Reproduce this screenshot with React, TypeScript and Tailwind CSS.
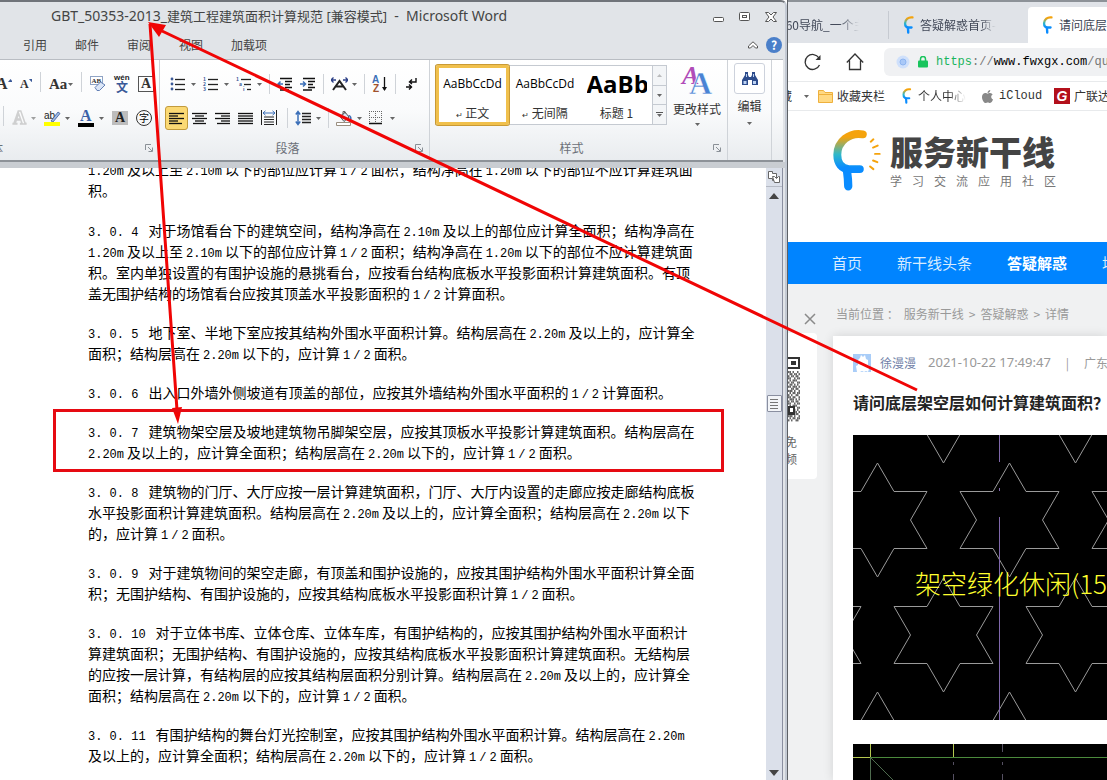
import type { ReactNode } from "react";
import clsx from "clsx";
import { FaApple } from "react-icons/fa";

const TABS = ["引用", "邮件", "审阅", "视图", "加载项"];

// one entry per clause, one string per printed line
const CLAUSES: { no?: string; lines: string[] }[] = [
  {
    lines: [
      "1.20m 及以上至 2.10m 以下的部位应计算 1/2 面积；结构净高在 1.20m 以下的部位不应计算建筑面",
      "积。",
    ],
  },
  {
    no: "3. 0. 4",
    lines: [
      "对于场馆看台下的建筑空间，结构净高在 2.10m 及以上的部位应计算全面积；结构净高在",
      "1.20m 及以上至 2.10m 以下的部位应计算 1/2 面积；结构净高在 1.20m 以下的部位不应计算建筑面",
      "积。室内单独设置的有围护设施的悬挑看台，应按看台结构底板水平投影面积计算建筑面积。有顶",
      "盖无围护结构的场馆看台应按其顶盖水平投影面积的 1/2 计算面积。",
    ],
  },
  {
    no: "3. 0. 5",
    lines: [
      "地下室、半地下室应按其结构外围水平面积计算。结构层高在 2.20m 及以上的，应计算全",
      "面积；结构层高在 2.20m 以下的，应计算 1/2 面积。",
    ],
  },
  {
    no: "3. 0. 6",
    lines: ["出入口外墙外侧坡道有顶盖的部位，应按其外墙结构外围水平面积的 1/2 计算面积。"],
  },
  {
    no: "3. 0. 7",
    lines: [
      "建筑物架空层及坡地建筑物吊脚架空层，应按其顶板水平投影计算建筑面积。结构层高在",
      "2.20m 及以上的，应计算全面积；结构层高在 2.20m 以下的，应计算 1/2 面积。",
    ],
  },
  {
    no: "3. 0. 8",
    lines: [
      "建筑物的门厅、大厅应按一层计算建筑面积，门厅、大厅内设置的走廊应按走廊结构底板",
      "水平投影面积计算建筑面积。结构层高在 2.20m 及以上的，应计算全面积；结构层高在 2.20m 以下",
      "的，应计算 1/2 面积。",
    ],
  },
  {
    no: "3. 0. 9",
    lines: [
      "对于建筑物间的架空走廊，有顶盖和围护设施的，应按其围护结构外围水平面积计算全面",
      "积；无围护结构、有围护设施的，应按其结构底板水平投影面积计算 1/2 面积。",
    ],
  },
  {
    no: "3. 0. 10",
    lines: [
      "对于立体书库、立体仓库、立体车库，有围护结构的，应按其围护结构外围水平面积计",
      "算建筑面积；无围护结构、有围护设施的，应按其结构底板水平投影面积计算建筑面积。无结构层",
      "的应按一层计算，有结构层的应按其结构层面积分别计算。结构层高在 2.20m 及以上的，应计算全",
      "面积；结构层高在 2.20m 以下的，应计算 1/2 面积。",
    ],
  },
  {
    no: "3. 0. 11",
    lines: [
      "有围护结构的舞台灯光控制室，应按其围护结构外围水平面积计算。结构层高在 2.20m",
      "及以上的，应计算全面积；结构层高在 2.20m 以下的，应计算 1/2 面积。",
    ],
  },
];

const MONO = "font-['Liberation_Mono','Noto_Sans_CJK_SC',monospace]";

function Line({ text }: { text: string }) {
  return (
    <>
      {text.split(/\s*(\d\.\d\dm|1\/2)\s*/).map((part, i, parts) => {
        if (i % 2 === 0) return part;
        const atStart = i === 1 && parts[0] === "";
        return (
          <span key={i} className={clsx(MONO, "mr-[3px] text-xs leading-none", !atStart && "ml-[3px]")}>
            {part === "1/2" ? (
              <>
                1<span className="px-[3px]">/</span>2
              </>
            ) : (
              part
            )}
          </span>
        );
      })}
    </>
  );
}

function Caret({ className }: { className?: string }) {
  return (
    <svg width="5" height="3" viewBox="0 0 5 3" className={clsx("shrink-0", className)}>
      <path d="M0 0h5L2.5 3z" fill="#666" />
    </svg>
  );
}

function Tool({ label, className, drop, children }: { label: string; className?: string; drop?: boolean; children: ReactNode }) {
  return (
    <button
      type="button"
      aria-label={label}
      className={clsx("flex h-6 shrink-0 items-center", drop ? "justify-between" : "justify-center", className ?? (drop ? "w-[26px]" : "w-4"))}
    >
      {children}
      {drop && <Caret />}
    </button>
  );
}

function Sep() {
  return <span className="h-5 w-px shrink-0 bg-[#cfd3d8]" />;
}

function Lines({ rows }: { rows: [number, number][] }) {
  return (
    <svg width="15" height="13" viewBox="0 0 15 13" stroke="#111" strokeWidth="1.3">
      {rows.map(([a, b], i) => (
        <path key={i} d={`M${a} ${1.5 + i * 2.5}H${b}`} />
      ))}
    </svg>
  );
}

function ListIcon({ marks }: { marks: string[] }) {
  return (
    <svg width="16" height="16" viewBox="0 0 16 16" className="overflow-visible">
      {marks.map((m, i) => (
        <g key={i}>
          {m === "•" ? (
            <circle cx="2" cy={3 + i * 5} r="1.4" fill="#3b5998" />
          ) : (
            <text x={m === "a" ? 3 : m === "i" ? 7 : 0} y={5 + i * 5} fontSize="5" fontWeight="bold" fill="#3b5998">{m}</text>
          )}
          <path d={`M${m === "a" ? 8 : m === "i" ? 11 : 5} ${3.5 + i * 5}H15`} stroke="#222" strokeWidth="1.3" />
        </g>
      ))}
    </svg>
  );
}

function Indent({ out }: { out?: boolean }) {
  return (
    <svg width="16" height="14" viewBox="0 0 16 14" fill="none">
      <path d="M3 1.5h12M8 4.5h7M8 7.5h5M8 10.5h7M3 13h9" stroke="#111" strokeWidth="1.4" />
      <path d={out ? "M6 7H1M3.500 4.500 1 7l2.500 2.500" : "M0 7h5M3 4.500 5.500 7 3 9.500"} stroke="#3b6fb8" strokeWidth="1.5" />
    </svg>
  );
}

function Launcher() {
  return (
    <button type="button" aria-label="对话框启动器">
      <svg width="8" height="8" viewBox="0 0 8 8" fill="none" stroke="#8a9097">
        <path d="M.5 6V.5H6M3 3l4 4M7.500 3.500v4h-4" />
      </svg>
    </button>
  );
}

function GroupLabel({ text }: { text: string }) {
  return (
    <div className="mt-auto flex h-6 items-center pr-[6px]">
      <span className="flex-1 text-center text-xs text-[#6b7078]">{text}</span>
      <Launcher />
    </div>
  );
}

function FontGroup() {
  return (
    <section className="flex w-40 shrink-0 flex-col border-r border-[#cfd3d8]">
      <div className="mt-3 flex gap-2 font-['Liberation_Serif',serif] font-bold text-[#333]">
        <Tool label="增大字体" className="w-3">
          <span className="-ml-1 text-base">A</span>
          <svg width="5" height="12"><path d="M0 4h5L2.500 1z" fill="#3b5998" /></svg>
        </Tool>
        <Tool label="缩小字体" className="w-3">
          <span className="text-xs">A</span>
          <svg width="5" height="12"><path d="M0 1h5L2.500 4z" fill="#3b5998" /></svg>
        </Tool>
        <Sep />
        <Tool label="更改大小写" drop className="w-6"><span className="text-[15px]">Aa</span></Tool>
        <Sep />
        <Tool label="清除格式">
          <svg width="16" height="17" viewBox="0 0 16 17">
            <rect x=".5" y=".5" width="12" height="8" fill="#fff" stroke="#8fa3c4" />
            <text x="1.500" y="7" fontSize="7" fill="#333">AB</text>
            <path d="M5 11.500 10.500 6l4.500 3-5.500 5.500H7z" fill="#dbe6f7" stroke="#6380b5" />
          </svg>
        </Tool>
        <Tool label="拼音指南">
          <svg width="16" height="18" viewBox="0 0 16 18" className="overflow-visible">
            <text x="0" y="5" fontSize="8" fontFamily="Liberation Sans" fill="#222">wén</text>
            <text x="2" y="17" fontSize="12" fontFamily="Noto Sans CJK SC" fill="#3b5998">文</text>
          </svg>
        </Tool>
        <Tool label="字符边框"><span className="size-4 border border-[#555] text-center text-sm leading-[14px]">A</span></Tool>
      </div>
      <div className="mt-[10px] flex gap-2 pl-[3px] font-['Liberation_Serif',serif] font-bold">
        <Sep />
        <Tool label="文本效果" drop className="w-6 opacity-60">
          <svg width="16" height="16" viewBox="0 0 16 16" className="overflow-visible">
            <text x="1" y="14" fontSize="18" fill="#fff" stroke="#b5b5b5" strokeWidth="1.5">A</text>
          </svg>
        </Tool>
        <Tool label="突出显示" drop>
          <svg width="18" height="17" viewBox="0 0 18 17">
            <text x="0" y="9" fontSize="10" fontFamily="Liberation Sans" fontWeight="normal" fill="#222">ab</text>
            <path d="M7 11 14 2l2 1.500L9 12z" fill="#9dbbe6" stroke="#3b5998" strokeWidth=".8" />
            <path d="M0 12h16v4H0z" fill="#ff0" />
          </svg>
        </Tool>
        <Tool label="字体颜色" drop>
          <svg width="16" height="17" viewBox="0 0 16 17" className="overflow-visible">
            <text x="2" y="11" fontSize="16" fill="#3b62a8">A</text>
            <path d="M0 13h16v4H0z" fill="#000" />
          </svg>
        </Tool>
        <Tool label="字符底纹"><span className="w-4 bg-[#bdbdbd] text-center text-sm leading-[14px] text-[#222]">A</span></Tool>
        <Tool label="带圈字符">
          <span className="size-4 rounded-full border border-[#333] text-center font-['Noto_Sans_CJK_SC',sans-serif] text-[10px] leading-[14px] font-normal text-black">字</span>
        </Tool>
      </div>
      <div className="mt-auto flex h-6 items-center justify-between pr-[6px] text-xs text-[#6b7078]">
        <span className="-ml-[9px]">体</span>
        <Launcher />
      </div>
    </section>
  );
}

function ParagraphGroup() {
  return (
    <section className="flex w-[270px] shrink-0 flex-col border-r border-[#cfd3d8]">
      <div className="mt-3 flex items-center gap-[7px] pl-[10px]">
        <Tool label="项目符号" drop><ListIcon marks={["•", "•", "•"]} /></Tool>
        <Tool label="编号" drop><ListIcon marks={["1", "2", "3"]} /></Tool>
        <Tool label="多级列表" drop><ListIcon marks={["1", "a", "i"]} /></Tool>
        <Sep />
        <Tool label="减少缩进量"><Indent out /></Tool>
        <Tool label="增加缩进量"><Indent /></Tool>
        <Sep />
        <Tool label="中文版式" drop>
          <svg width="17" height="14" viewBox="0 0 17 14" fill="none">
            <path d="M2 13 8.500 4 15 13M5 9.500h7" stroke="#222" strokeWidth="2" />
            <path d="M0 3h5M2.500.5 0 3l2.500 2.500M17 3h-5M14.500.5 17 3l-2.500 2.500" stroke="#2b3f86" strokeWidth="1.300" />
          </svg>
        </Tool>
        <Sep />
        <Tool label="排序">
          <svg width="16" height="18" viewBox="0 0 16 18" fontFamily="Liberation Sans" fontWeight="bold" className="overflow-visible">
            <text x="0" y="8" fontSize="10" fill="#3b6fb8">A</text>
            <text x="1" y="17" fontSize="10" fill="#a0522d">Z</text>
            <path d="M12.500 2v13" stroke="#111" strokeWidth="1.300" />
            <path d="M10 12h5l-2.500 4z" fill="#111" />
          </svg>
        </Tool>
        <Sep />
        <Tool label="显示编辑标记">
          <svg width="14" height="14" viewBox="0 0 14 14" fill="none" stroke="#111" strokeWidth="1.400">
            <path d="M12 1v4H6M8 2.500 5.500 5 8 7M2 10h6M5 7.500 7.500 10 5 12.500" />
          </svg>
        </Tool>
      </div>
      <div className="mt-[10px] flex items-center gap-[7px] pl-[5px]">
        <div className="flex">
          <Tool label="左对齐" className="w-[23px] rounded-[3px] border border-[#c29b3d] bg-[#fbd974]">
            <Lines rows={[[0, 15], [0, 9], [0, 15], [0, 9], [0, 13]]} />
          </Tool>
          <Tool label="居中" className="w-[23px]"><Lines rows={[[0, 15], [3, 12], [0, 15], [3, 12], [1, 14]]} /></Tool>
          <Tool label="右对齐" className="w-[23px]"><Lines rows={[[0, 15], [6, 15], [0, 15], [6, 15], [2, 15]]} /></Tool>
          <Tool label="两端对齐" className="w-[23px]"><Lines rows={[[0, 15], [0, 15], [0, 15], [0, 15], [0, 15]]} /></Tool>
          <Tool label="分散对齐" className="w-[23px]">
            <svg width="16" height="16" viewBox="0 0 16 16" fill="none">
              <path d="M.5 0v15M15.500 0v15M3 7h10M3 9.500h10M3 12h10M3 14.500h10" stroke="#222" />
              <path d="M2 3h12M4.500.8 2 3l2.500 2.200M11.500.8 14 3l-2.500 2.200" stroke="#3b6fb8" />
            </svg>
          </Tool>
        </div>
        <Sep />
        <Tool label="行距" drop>
          <svg width="16" height="16" viewBox="0 0 16 16" fill="none">
            <path d="M7 3.500h9M7 6.500h9M7 9.500h9M7 12.500h9" stroke="#222" strokeWidth="1.300" />
            <path d="M3 2v12M.8 4.500 3 1.500l2.200 3M.8 11.500 3 14.500l2.200-3" stroke="#3b6fb8" strokeWidth="1.500" />
          </svg>
        </Tool>
        <Sep />
        <Tool label="底纹" drop>
          <svg width="17" height="16" viewBox="0 0 17 16" fill="none">
            <path d="M4 6.500 9 2l4 5-5 4.500z" fill="#dce6f5" stroke="#555" />
            <path d="M7 5V1.500h2V4" stroke="#666" />
            <path d="M12 5c3 0 4 2 3.500 5-1.500-.5-2-2-2-3.500z" fill="#3b6fb8" />
            <path d="M.5 12.500h14v3H.5z" fill="#fff" stroke="#9a8f80" />
          </svg>
        </Tool>
        <Tool label="边框" drop>
          <svg width="14" height="14" viewBox="0 0 14 14" fill="none" stroke="#666">
            <path d="M.5 0v12M6.500 0v12M12.500 0v12M0 .5h13M0 6.500h13" strokeDasharray="1 1" />
            <path d="M0 12.500h13" stroke="#111" strokeWidth="1.500" />
          </svg>
        </Tool>
      </div>
      <GroupLabel text="段落" />
    </section>
  );
}

function StyleGroup() {
  return (
    <section className="flex w-[298px] shrink-0 flex-col border-r border-[#cfd3d8]">
      <div className="mt-[5px] flex pl-[5px]">
        <div className="flex h-[60px] border border-[#c5cad1] bg-white text-[#333]">
          <button type="button" className="-my-px flex w-[73px] shrink-0 flex-col items-center justify-between rounded-[2px] border-3 border-[#f0c04c] pt-2 pb-[1px] ring-1 ring-[#c99a35]">
            <span className="font-['Open_Sans',sans-serif] text-xs text-black">AaBbCcDd</span>
            <span className="text-xs"><span className="text-[8px]">↵</span> 正文</span>
          </button>
          <button type="button" className="flex w-[72px] flex-col items-center justify-between pt-[10px] pb-[3px]">
            <span className="font-['Open_Sans',sans-serif] text-xs text-black">AaBbCcDd</span>
            <span className="text-xs"><span className="text-[8px]">↵</span> 无间隔</span>
          </button>
          <button type="button" className="flex w-[71px] flex-col items-center justify-between pb-[3px]">
            <span className="h-9 w-[60px] overflow-hidden text-left font-['Open_Sans',sans-serif] text-2xl leading-9 font-bold text-black">AaBb</span>
            <span className="text-xs">标题 1</span>
          </button>
          <div className="flex w-[14px] flex-col divide-y divide-[#c5cad1] border-l border-[#c5cad1] bg-[#f3f5f7]">
            <button type="button" aria-label="上一行" className="flex flex-1 items-center justify-center"><Caret className="rotate-180 opacity-40" /></button>
            <button type="button" aria-label="下一行" className="flex flex-1 items-center justify-center"><Caret /></button>
            <button type="button" aria-label="其他" className="flex flex-1 flex-col items-center justify-center gap-px"><span className="h-px w-[7px] bg-[#555]" /><Caret /></button>
          </div>
        </div>
        <button type="button" className="flex flex-1 flex-col items-center text-xs text-[#333]">
          <svg width="32" height="32" viewBox="0 0 32 32" fontFamily="Liberation Serif" fontWeight="bold" className="overflow-visible">
            <text x="1" y="19" fontSize="26" fontStyle="italic" fill="#b04cb8">A</text>
            <text x="8" y="29" fontSize="32" fill="#4a83d4" stroke="#fff" strokeWidth=".5">A</text>
          </svg>
          <span className="mt-[2px] leading-5">更改样式</span>
          <Caret className="mt-1" />
        </button>
      </div>
      <GroupLabel text="样式" />
    </section>
  );
}

function EditGroup() {
  return (
    <section className="flex w-11 shrink-0 justify-center border-r border-[#cfd3d8] pt-[3px]">
      <button type="button" className="flex flex-col items-center self-start text-xs text-[#333]">
        <span className="flex size-[31px] items-center justify-center rounded-[3px] border border-[#cdd2dc] bg-white">
          <svg width="16" height="15" viewBox="0 0 16 15">
            <path d="M3 1h3v3l1 2h2l1-2V1h3v3l3 5v5h-6v-5H6v5H0V9l3-5z" fill="#2d4c8c" />
            <path d="M1.500 10h3v3h-3zM11 10h3v3h-3zM4 3h1v3H4zM11 3h1v3h-1z" fill="#bcd2f2" />
          </svg>
        </span>
        <span className="mt-[2px] leading-5">编辑</span>
        <Caret className="mt-[6px]" />
      </button>
    </section>
  );
}

function TitleBar() {
  return (
    <header className="flex h-[29px] shrink-0 items-center justify-between pr-2 pl-[51px]">
      <h1 className="font-['Noto_Sans','Noto_Sans_CJK_SC',sans-serif] text-[13px] whitespace-pre text-[#444]">
        <span className="text-sm">GBT_50353-2013_</span>
        建筑工程建筑面积计算规范 [兼容模式]
        <span className="text-sm">{"  -  Microsoft Word"}</span>
      </h1>
      <div className="flex items-center gap-[14px]">
        <button type="button" aria-label="最小化">
          <svg width="12" height="12" fill="#fff" stroke="#555"><rect x=".5" y="6.500" width="10" height="4" rx="1" /></svg>
        </button>
        <button type="button" aria-label="还原">
          <svg width="12" height="12" fill="#fff" stroke="#555"><rect x=".5" y="1.500" width="10" height="8" rx="1" /><rect x="3.500" y="4.500" width="4" height="2" /></svg>
        </button>
        <button type="button" aria-label="关闭">
          <svg width="12" height="12" viewBox="0 0 12 12" fill="#fff" stroke="#555"><path d="M.5 1.500h3L6 4l2.500-2.500h3L8 6l3.500 4.500h-3L6 8l-2.500 2.500h-3L4 6z" /></svg>
        </button>
      </div>
    </header>
  );
}

function WordWindow() {
  return (
    <main className="flex min-w-0 flex-1 flex-col rounded-tr-md border-t-2 border-r-2 border-t-[#70747a] border-r-[#c3c9d3] bg-[#e1e4e8] font-['Noto_Sans_CJK_SC',sans-serif]">
      <TitleBar />
      <nav className="flex h-7 shrink-0 items-center gap-7 pr-[3px] pl-[23px] text-xs text-[#444]">
        {TABS.map((t) => (
          <button type="button" key={t}>{t}</button>
        ))}
        <div className="ml-auto flex items-center gap-2">
          <button type="button" aria-label="功能区最小化">
            <svg width="10" height="8" viewBox="0 0 10 8" fill="#fff" stroke="#555"><path d="M.5 5 5 .8 9.500 5v2h-2L5 4.500 2.500 7h-2z" /></svg>
          </button>
          <button type="button" aria-label="帮助" className="size-4 rounded-full bg-[#4a7fc9] text-center text-xs leading-4 font-bold text-white">?</button>
        </div>
      </nav>
      <div className="mr-[2px] flex h-[103px] shrink-0 overflow-hidden border-t border-b-2 border-t-[#b9bdc3] border-b-[#8d9298] bg-linear-to-b from-white via-[#fafbfc] to-[#e9ecef]">
        <FontGroup />
        <ParagraphGroup />
        <StyleGroup />
        <EditGroup />
      </div>
      <div className="h-[6px] shrink-0 bg-[#c9cdd2]" />
      <div className="flex min-h-0 flex-1">
        <article className="min-w-0 flex-1 overflow-hidden bg-white pl-[88px] text-sm leading-[21px] whitespace-nowrap text-black">
          {/* the page is scrolled, so the first line is cut by the ribbon */}
          <div className="-mt-[9px]">
            {CLAUSES.map((c, i) => (
              <p key={i} className={clsx(i === 0 ? "mb-[19px]" : "mb-[18px]")}>
                {c.lines.map((l, j) => (
                  <span key={l} className="block">
                    {j === 0 && c.no && <span className={clsx(MONO, "mr-[10px] text-xs leading-none")}>{c.no}</span>}
                    <Line text={l} />
                  </span>
                ))}
              </p>
            ))}
          </div>
        </article>
        <div className="mr-[2px] flex w-[17px] shrink-0 flex-col items-center border-r border-[#8a8fa0] bg-[#dbe0ea]">
          <button type="button" aria-label="标尺" className="flex h-[19px] w-full items-center justify-center border-b border-[#b5bac4]">
            <svg width="12" height="12" viewBox="0 0 12 12" fill="#fff" stroke="#666">
              <path d="M.5.5h4v2h4v7h-4v-2h-4z" /><path d="M4.500 5.500h2l2 2 2-2h1v6h-5z" />
            </svg>
          </button>
          <button type="button" aria-label="向上滚动" className="mt-[6px]"><svg width="10" height="6"><path d="M0 6h10L5 0z" fill="#444" /></svg></button>
          <div className="flex-[196]" />
          <span className="flex h-[17px] w-[15px] flex-col items-center justify-center gap-[2px] rounded-[1px] border border-[#8a8fa0] bg-[#f3f5f8]">
            <i className="h-px w-2 bg-[#777]" /><i className="h-px w-2 bg-[#777]" /><i className="h-px w-2 bg-[#777]" /><i className="h-px w-2 bg-[#777]" />
          </span>
          <div className="flex-[358]" />
          <button type="button" aria-label="向下滚动" className="mb-1"><svg width="10" height="6"><path d="M0 0h10L5 6z" fill="#444" /></svg></button>
        </div>
      </div>
    </main>
  );
}

function Mark({ id, width, height, rays }: { id: string; width: number; height: number; rays?: boolean }) {
  return (
    <svg width={width} height={height} viewBox={rays ? "0 0 148 188" : "0 0 108 188"} fill="none" strokeLinecap="round" className="shrink-0">
      <defs>
        <linearGradient id={id} x1="0" y1="0" x2="0" y2="188" gradientUnits="userSpaceOnUse">
          <stop offset=".12" stopColor="#f5a30c" />
          <stop offset=".4" stopColor="#2fb8c8" />
          <stop offset=".62" stopColor="#0a8cff" />
        </linearGradient>
      </defs>
      <path d="M90 15C50 8 13 36 13 77c0 26 13 43 36 43h32" stroke={`url(#${id})`} strokeWidth="24" />
      <path d="M42 124c2 14 4 26 4 48" stroke="#0a8cff" strokeWidth="25" />
      {rays && <path d="m114 37 8-7M121 55l14-6M127 74h14M121 94l13 5M112 112l10 8" stroke="#f5a30c" strokeWidth="6" />}
    </svg>
  );
}

function BrowserChrome() {
  return (
    <>
      <div className="flex h-[43px] shrink-0 items-end overflow-hidden border-t-2 border-[#8d9298] bg-[#e0e3e8] text-xs whitespace-nowrap text-[#3b4252]">
        <button type="button" className="flex h-9 w-[100px] shrink-0 items-center">
          <span className="-ml-[9px] w-20 overflow-hidden bg-linear-to-r from-[#3b4252] from-75% to-transparent bg-clip-text text-left text-transparent">360导航_一个主页</span>
        </button>
        <span className="mb-1 h-7 w-px shrink-0 bg-[#c6cad1]" />
        <button type="button" className="flex h-9 w-[139px] shrink-0 items-center gap-1 pl-[13px]">
          <Mark id="tab-a" width={14} height={18} />
          <span className="bg-linear-to-r from-[#3b4252] from-80% to-transparent bg-clip-text text-transparent">答疑解惑首页-</span>
        </button>
        <button type="button" className="flex h-9 w-60 shrink-0 items-center gap-1 rounded-tl bg-white pl-[13px]">
          <Mark id="tab-b" width={14} height={18} />
          请问底层架空层如何计算
        </button>
      </div>
      <div className="flex h-[38px] shrink-0 items-center overflow-hidden bg-white pl-[16px]">
        <button type="button" aria-label="刷新">
          <svg width="18" height="18" viewBox="0 0 18 18" fill="none" stroke="#333" strokeWidth="1.300"><path d="M15.500 12A7.500 7.500 0 1 1 15 5" /><path d="M16.500 2v5h-5z" fill="#333" stroke="none" /></svg>
        </button>
        <button type="button" aria-label="主页" className="ml-6">
          <svg width="18" height="18" viewBox="0 0 18 18" fill="none" stroke="#333" strokeWidth="1.300"><path d="M.8 9.500 9 1l8.200 8.500M3.500 7.500V16.500h11V7.500" /></svg>
        </button>
        <button type="button" className={clsx("ml-5 flex h-7 flex-1 items-center gap-2 rounded-l-md bg-[#f0f1f3] pl-3 text-xs whitespace-nowrap text-[#777]", MONO)}>
          <svg width="14" height="14" viewBox="0 0 14 14" className="shrink-0"><circle cx="7" cy="7" r="6.500" fill="#cfe0fb" /><circle cx="7" cy="7" r="3" fill="#a9c8f7" stroke="#8db4f0" /></svg>
          <svg width="10" height="12" viewBox="0 0 10 12" className="shrink-0"><rect y="4.500" width="10" height="7" rx="1" fill="#19c45d" /><path d="M2.500 5V3a2.500 2.500 0 0 1 5 0v2" fill="none" stroke="#19c45d" strokeWidth="1.500" /></svg>
          <span><span className="text-[#19b45d]">https</span>://<span className="text-black">www.fwxgx.com</span>/question</span>
        </button>
      </div>
      <div className="flex h-[30px] shrink-0 items-center overflow-hidden border-y border-[#e8eaec] bg-white text-xs whitespace-nowrap text-[#333]">
        <button type="button" className="flex w-[30px] shrink-0 items-center">
          <span className="-ml-2">藏</span>
          <Caret className="ml-3" />
        </button>
        <a href="#" className="flex w-[82px] shrink-0 items-center gap-1">
          <svg width="15" height="13" viewBox="0 0 15 13" fill="#ffd983" stroke="#eeb03c"><path d="M.5 12.500V.5h5l1.500 2h7.500v10zM.5 4.500h14" /></svg>
          收藏夹栏
        </a>
        <a href="#" className="flex w-20 shrink-0 items-center gap-1">
          <Mark id="bookmark" width={14} height={16} />
          <span className="bg-linear-to-r from-[#333] from-65% to-transparent bg-clip-text text-transparent">个人中心</span>
        </a>
        <a href="#" className="flex w-[74px] shrink-0 items-center gap-1">
          <FaApple size={15} color="#888" />
          <span className="font-['Liberation_Mono',monospace]">iCloud</span>
        </a>
        <a href="#" className="flex shrink-0 items-center gap-1">
          <span className="size-4 bg-[#b3101b] text-center font-['Liberation_Sans',sans-serif] text-sm leading-4 font-bold text-white italic">G</span>
          广联达
        </a>
      </div>
    </>
  );
}

function Star({ x, y }: { x: number; y: number }) {
  return (
    <path
      transform={`translate(${x} ${y})`}
      d="M0-57 16.500-28.500H49.500L33 0 49.500 28.500H16.500L0 57-16.500 28.500H-49.500L-33 0-49.500-28.500H-16.500Z"
    />
  );
}

function Drawing() {
  const cols = [-1, 0, 1, 2, 3];
  return (
    <svg height="285" className="mt-[21px] w-full bg-black">
      <g fill="none" stroke="#9a9a9a">
        {cols.map((c) => (
          <g key={c}>
            <Star x={90.5 + c * 132} y={-29} />
            <Star x={24.5 + c * 132} y={85} />
            <Star x={90.5 + c * 132} y={200} />
            <Star x={24.5 + c * 132} y={314} />
          </g>
        ))}
      </g>
      <path d="M146.500 0v27M146.500 53v3M146.500 82v203" stroke="#8068ab" />
      <text x="62" y="159" fontSize="26" fontWeight="300" fill="#ffff2e" fontFamily="Noto Sans CJK SC">架空绿化休闲(15</text>
    </svg>
  );
}

const QR = [
  "110100101", "011011010", "101101100", "110010111", "010111001", "101100110", "011010101",
  "110111010", "001101101", "111010010", "010110111", "101001101", "110110010", "011101011",
];

function QrFloat() {
  return (
    <aside className="w-[29px] shrink-0 overflow-hidden">
      <button type="button" aria-label="关闭二维码" className="ml-4 block pt-[29px]">
        <svg width="12" height="12" stroke="#8a8a8a" strokeWidth="1.500"><path d="M1 1l10 10M11 1 1 11" /></svg>
      </button>
      <div className="mt-2 h-[146px] rounded-r bg-white pt-6 text-xs text-[#666]">
        <svg width="13" height="66" fill="#333">
          <path d="M0 0h12v12H0zM0 2v8h10V2z" fillRule="evenodd" />
          <path d="M3 4h5v4H3z" />
          <g transform="translate(0 14)" opacity=".75">
            {[...QR, ...QR.slice(2, 12)].flatMap((row, y) =>
              row.slice(0, 8).split("").map((b, x) => b === "1" && <rect key={`${x}-${y}`} x={x * 1.5} y={y * 2.1} width="1.5" height="2.1" />)
            )}
          </g>
          <path d="M0 49h7v9H0z" />
          <path d="M2 51h3v4H2z" fill="#fff" />
        </svg>
        <p className="mt-[10px] -ml-[3px] leading-[17px]">免<br />频</p>
      </div>
    </aside>
  );
}

function Browser() {
  return (
    <div className="flex w-80 shrink-0 flex-col overflow-hidden border-l border-[#5d6166] bg-[#f0f1f2] font-['Noto_Sans_CJK_SC',sans-serif]">
      <BrowserChrome />
      <header className="flex h-[131px] shrink-0 bg-white pt-[18px] pl-[45px] whitespace-nowrap">
        <Mark id="brand" width={49} height={63} rays />
        <div className="ml-2">
          <p className="text-[33px] leading-[44px] font-black text-[#444]">服务新干线</p>
          <p className="flex gap-[10px] text-xs leading-4 text-[#777]">
            {"学习交流应用社区".split("").map((c) => (
              <span key={c}>{c}</span>
            ))}
          </p>
        </div>
      </header>
      <nav className="flex h-[42px] shrink-0 items-center gap-[35px] bg-[#0084ff] pl-11 text-[15px] whitespace-nowrap text-[#d8ecff]">
        <a href="#">首页</a>
        <a href="#">新干线头条</a>
        <a href="#" className="font-bold text-white">答疑解惑</a>
        <a href="#">培训</a>
      </nav>
      <div className="flex min-h-0 flex-1">
        <QrFloat />
        <div className="ml-4 flex min-w-0 flex-1 flex-col text-xs whitespace-nowrap text-[#999]">
          <div className="flex h-[52px] shrink-0 items-center gap-[5px] pt-2 pl-[3px]">
            <span>当前位置 ：</span>
            <a href="#">服务新干线</a>
            <span>&gt;</span>
            <a href="#">答疑解惑</a>
            <span>&gt;</span>
            <span>详情</span>
          </div>
          <article className="min-h-0 flex-1 overflow-hidden bg-white pt-[18px] pl-5 shadow-[0_0_10px_rgba(0,0,0,0.12)]">
            <div className="flex h-[18px] items-center">
              <svg width="18" height="18" className="mr-[9px] shrink-0">
                <path d="M0 0h18v18H0z" fill="#a9cdf8" />
                <path d="M4 18l-1-6 2-1V6l2-2 1-3 2 2 2-2 1 4 2 1v5l2 1-2 6-2-1-2 1-2-1-2 1z" fill="#fff" />
              </svg>
              <a href="#" className="text-[#6f7fa8]">徐漫漫</a>
              <time className="ml-3 font-['Noto_Sans',sans-serif] text-[13px]">2021-10-22 17:49:47</time>
              <span className="mx-[15px]">|</span>
              <span>广东省</span>
            </div>
            <h2 className="mt-[18px] text-base font-bold text-[#222]">请问底层架空层如何计算建筑面积？</h2>
            <Drawing />
            <svg height="80" className="mt-6 w-full bg-black" fill="none">
              <path d="M0 13.500H600" stroke="#4b8a3c" />
              <path d="M0 13.500H17M17.500 0v13M100.500 0v13" stroke="#b5c850" />
              <path d="M17.500 14v66M17.500 13.500 80 76" stroke="#4e6b4e" />
              <path d="M100.500 18v3M100.500 30v50M149.500 0v8M149.500 18v3M149.500 30v50" stroke="#555062" />
            </svg>
          </article>
        </div>
      </div>
    </div>
  );
}

export default function App() {
  return (
    <div className="relative flex h-screen overflow-hidden bg-white">
      <WordWindow />
      <Browser />
      {/* red annotations over both windows */}
      <svg className="pointer-events-none absolute inset-0 size-full" fill="none" stroke="#f00505" strokeWidth="3">
        <path d="M917 390 162 31M150 24l27 386" />
        <path d="M148 22l18 3-7 12zM178 424l-6-16 10-1z" fill="#f00505" stroke="none" />
        <rect x="54.500" y="410.500" width="668" height="60" stroke="#e60a12" />
      </svg>
    </div>
  );
}
